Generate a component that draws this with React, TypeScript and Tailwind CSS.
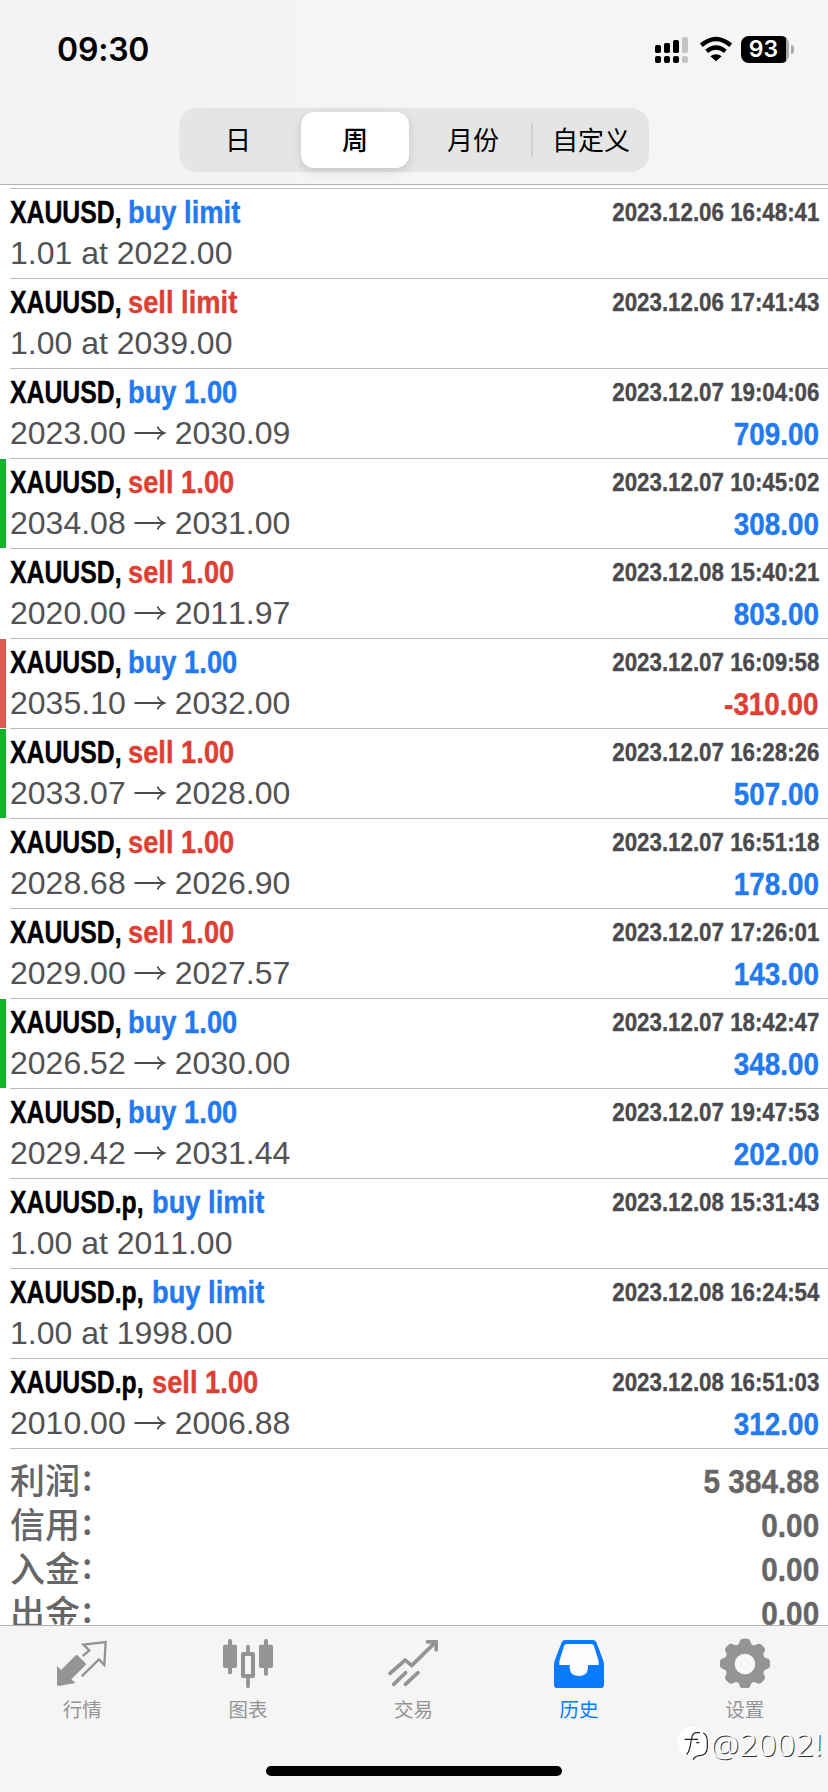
import clsx from 'clsx';
import type { ReactNode } from 'react';

type Deal = {
    symbol: string;
    side: 'buy' | 'sell';
    size: string;
    from: string;
    to?: string;
    time: string;
    profit?: string;
    mark?: 'green' | 'red';
};

const deals: Deal[] = [
    { symbol: 'XAUUSD', side: 'buy', size: 'limit', from: '1.01 at 2022.00', time: '2023.12.06 16:48:41' },
    { symbol: 'XAUUSD', side: 'sell', size: 'limit', from: '1.00 at 2039.00', time: '2023.12.06 17:41:43' },
    { symbol: 'XAUUSD', side: 'buy', size: '1.00', from: '2023.00', to: '2030.09', time: '2023.12.07 19:04:06', profit: '709.00' },
    { symbol: 'XAUUSD', side: 'sell', size: '1.00', from: '2034.08', to: '2031.00', time: '2023.12.07 10:45:02', profit: '308.00', mark: 'green' },
    { symbol: 'XAUUSD', side: 'sell', size: '1.00', from: '2020.00', to: '2011.97', time: '2023.12.08 15:40:21', profit: '803.00' },
    { symbol: 'XAUUSD', side: 'buy', size: '1.00', from: '2035.10', to: '2032.00', time: '2023.12.07 16:09:58', profit: '-310.00', mark: 'red' },
    { symbol: 'XAUUSD', side: 'sell', size: '1.00', from: '2033.07', to: '2028.00', time: '2023.12.07 16:28:26', profit: '507.00', mark: 'green' },
    { symbol: 'XAUUSD', side: 'sell', size: '1.00', from: '2028.68', to: '2026.90', time: '2023.12.07 16:51:18', profit: '178.00' },
    { symbol: 'XAUUSD', side: 'sell', size: '1.00', from: '2029.00', to: '2027.57', time: '2023.12.07 17:26:01', profit: '143.00' },
    { symbol: 'XAUUSD', side: 'buy', size: '1.00', from: '2026.52', to: '2030.00', time: '2023.12.07 18:42:47', profit: '348.00', mark: 'green' },
    { symbol: 'XAUUSD', side: 'buy', size: '1.00', from: '2029.42', to: '2031.44', time: '2023.12.07 19:47:53', profit: '202.00' },
    { symbol: 'XAUUSD.p', side: 'buy', size: 'limit', from: '1.00 at 2011.00', time: '2023.12.08 15:31:43' },
    { symbol: 'XAUUSD.p', side: 'buy', size: 'limit', from: '1.00 at 1998.00', time: '2023.12.08 16:24:54' },
    { symbol: 'XAUUSD.p', side: 'sell', size: '1.00', from: '2010.00', to: '2006.88', time: '2023.12.08 16:51:03', profit: '312.00' },
];

const summary = [
    { label: '利润', value: '5 384.88' },
    { label: '信用', value: '0.00' },
    { label: '入金', value: '0.00' },
    { label: '出金', value: '0.00' },
];

function StatusBar() {
    return (
        <div className="flex h-[98px] items-start justify-between pl-[57px] pr-[34px]">
            <span className="mt-[30px] font-['Inter',sans-serif] text-[32px] font-semibold leading-[40px] tracking-[-0.2px] text-black">
                09:30
            </span>
            <div className="mt-9 flex items-start">
                <svg className="h-[27px] w-[33px]" viewBox="0 0 99 81">
                    <rect x="0" y="27" width="18" height="24" rx="5" />
                    <rect x="27" y="21" width="18" height="30" rx="5" />
                    <rect x="54" y="12" width="18" height="39" rx="5" />
                    <rect x="81" y="3" width="18" height="48" rx="5" fill="#c4c4c6" />
                    <rect x="0" y="60" width="18" height="21" rx="6" />
                    <rect x="27" y="60" width="18" height="21" rx="6" />
                    <rect x="54" y="60" width="18" height="21" rx="6" />
                    <rect x="81" y="60" width="18" height="21" rx="6" fill="#c4c4c6" />
                </svg>
                <svg className="ml-[12px] h-[27px] w-[32px]" viewBox="0 0 96 81" fill="none" stroke="#000" strokeWidth="13">
                    <path d="M4 28Q48 -10 92 28" />
                    <path d="M20 46Q48 23 76 46" />
                    <path d="M31 61Q48 48 65 61L48 76Z" fill="#000" stroke="none" />
                </svg>
                <div className="ml-[9px] flex h-[27px] w-[48px] overflow-hidden rounded-[8px] bg-[#a9a9ab]">
                    <div className="w-[45px] bg-black text-center font-['Inter',sans-serif] text-[23px] font-semibold leading-[27px] text-white">
                        93
                    </div>
                </div>
                <div className="ml-[2px] mt-[9px] h-[9px] w-[3px] rounded-r-full bg-[#a9a9ab]" />
            </div>
        </div>
    );
}

function PeriodTabs() {
    const tab = 'flex items-center justify-center pt-[2px]';
    return (
        <div className="mx-auto mt-[10px] flex h-16 w-[470px] rounded-[18px] bg-[#e5e5e6] py-1 text-[26px] text-black font-['Liberation_Sans','Noto_Sans_CJK_SC',sans-serif]">
            <div className={clsx(tab, 'w-[118px]')}>日</div>
            <div className={clsx(tab, 'ml-[4px] w-[108px] rounded-[13px] bg-white font-medium shadow-[0_3px_10px_rgba(0,0,0,0.14)]')}>周</div>
            <div className={clsx(tab, 'w-[122px] pl-[6px]')}>月份</div>
            <div className="my-[11px] w-[2px] bg-[#cfcfd1]" />
            <div className={clsx(tab, 'flex-1')}>自定义</div>
        </div>
    );
}

function Arrow() {
    return (
        <svg className="mx-[8.500px] inline-block h-6 w-8 align-[-1px]" viewBox="0 0 32 24" fill="none" stroke="#4b4b4d" strokeWidth="1.8">
            <path d="M0.500 12H30M23.500 5.500C25 9 27.500 11 30.500 12C27.500 13 25 15 23.500 18.500" />
        </svg>
    );
}

function DealRow({ deal }: { deal: Deal }) {
    const lossOrGain = deal.profit?.startsWith('-') ? 'text-[#dc4035]' : 'text-[#2379ef]';
    return (
        <div className="flex h-[90px]">
            <div
                className={clsx(
                    'mt-px w-[6px]',
                    deal.mark === 'green' && 'bg-[#13b32b]',
                    deal.mark === 'red' && 'bg-[#df5a4e]'
                )}
            />
            <div className="ml-[4px] flex-1 border-t border-[#bcbcbe] pr-[9px] pt-[3px]">
                <div className="flex h-10 whitespace-nowrap font-bold leading-10 [-webkit-text-stroke-width:0.4px]">
                    <div className={deal.symbol.endsWith('.p') ? 'w-[142px]' : 'w-[118px]'}>
                        <span className="inline-block origin-left scale-x-[0.775] text-[32px] text-black">{deal.symbol},</span>
                    </div>
                    <div className={clsx('flex-1 text-[32px]', deal.side === 'buy' ? 'text-[#2379ef]' : 'text-[#dc4035]')}>
                        <span className="inline-block origin-left scale-x-[0.853]">
                            {deal.side} {deal.size}
                        </span>
                    </div>
                    <span className="inline-block origin-right scale-x-[0.858] text-[26px] text-[#4b4b4d]">{deal.time}</span>
                </div>
                <div className="flex h-[42px] justify-between text-[32px] leading-[42px] [font-kerning:none]">
                    <span className="text-[#525254]">
                        {deal.from}
                        {deal.to && <Arrow />}
                        {deal.to}
                    </span>
                    {deal.profit && (
                        <span
                            className={clsx(
                                'mt-px inline-block origin-right scale-x-[0.87] font-bold [-webkit-text-stroke-width:0.4px]',
                                lossOrGain
                            )}
                        >
                            {deal.profit}
                        </span>
                    )}
                </div>
            </div>
        </div>
    );
}

function Summary() {
    return (
        <div className="ml-[10px] border-t border-[#bcbcbe] pr-[9px] pt-[9px] text-[#666]">
            {summary.map((item) => (
                <div key={item.label} className="flex h-11 justify-between font-bold leading-[44px]">
                    <span className="-mt-px flex text-[35px] font-medium font-['Noto_Sans_CJK_SC',sans-serif]">
                        {item.label}
                        <span className="-mt-[3px] ml-[2px]">:</span>
                    </span>
                    <span className="mt-px inline-block origin-right scale-x-[0.875] text-[34px] [-webkit-text-stroke-width:0.4px]">
                        {item.value}
                    </span>
                </div>
            ))}
        </div>
    );
}

function TabItem({ label, active, children }: { label: string; active?: boolean; children: ReactNode }) {
    return (
        <div className={clsx('flex flex-1 flex-col items-center', active ? 'text-[#0a7aff]' : 'text-[#949494]')}>
            <svg className="mt-3 mr-[1px] h-[50px] w-[50px]" viewBox="0 0 150 150" fill="currentColor">
                {children}
            </svg>
            <span className="mr-[1px] mt-[6px] text-[19.5px] leading-[30px] font-['Noto_Sans_CJK_SC',sans-serif]">{label}</span>
        </div>
    );
}

// eight wide teeth with soft shoulders
const gearPath =
    Array.from({ length: 240 }, (_, i) => {
        const a = (i / 240) * Math.PI * 2;
        const r = 67 + 8.5 * Math.tanh(1.6 * (Math.cos(8 * a) + 0.4));
        return `${i ? 'L' : 'M'}${(75 + r * Math.cos(a)).toFixed(1)} ${(77 + r * Math.sin(a)).toFixed(1)}`;
    }).join('') + 'Z';

function TabBar() {
    return (
        <div className="relative h-[167px] border-t border-[#b0b0b2] bg-[#f5f5f6]">
            <div className="flex">
                <TabItem label="行情">
                    <path d="M0 83L12 96L57 51Q60 50 63 53L85 75Q88 78 86 81L43 124L55 135L6 144L0 142Z" />
                    <path d="M77 54L97 37L79 20L146 12L142 81L126 64L74 115" fill="none" stroke="currentColor" strokeWidth="7" />
                </TabItem>
                <TabItem label="图表">
                    <rect x="0" y="20" width="42" height="70" rx="5" />
                    <rect x="15" y="3" width="12" height="106" rx="5" />
                    <rect x="108" y="20" width="42" height="70" rx="5" />
                    <rect x="123" y="3" width="12" height="110" rx="5" />
                    <rect x="60" y="48" width="30" height="66" fill="none" stroke="currentColor" strokeWidth="12" strokeLinejoin="round" />
                    <path d="M75 26V44M75 118V145" stroke="currentColor" strokeWidth="11" strokeLinecap="round" />
                </TabItem>
                <TabItem label="交易">
                    <g fill="none" stroke="currentColor" strokeWidth="11" strokeLinecap="round" strokeLinejoin="round">
                        <path d="M6 106L52 66L71 83L141 14" />
                        <path d="M118 11.500H144.500V36" strokeLinejoin="miter" />
                        <path d="M17 139L53 104M52 139L90 104" />
                    </g>
                </TabItem>
                <TabItem label="历史" active>
                    <path d="M34 6H116Q124 6 127 13L146 62Q150 72 150 80V140Q150 150 140 150H10Q0 150 0 140V80Q0 72 4 62L23 13Q26 6 34 6Z" />
                    <path
                        d="M38 18H112Q118 18 120 24L134 70V81H102V90Q100 114 74.500 114Q49 114 47 90V81H16V70L30 24Q32 18 38 18Z"
                        fill="#fdfdfe"
                    />
                </TabItem>
                <TabItem label="设置">
                    <path d={gearPath} />
                    <circle cx="75" cy="78" r="31" fill="#f9f9f9" />
                    <circle cx="75" cy="78" r="13" fill="none" stroke="#eeeeef" strokeWidth="4" />
                </TabItem>
            </div>
            <div className="absolute bottom-[16px] left-[266px] h-[10px] w-[296px] rounded-full bg-black" />
            <Watermark />
        </div>
    );
}

function Watermark() {
    return (
        <div className="absolute right-[5px] top-[98px] flex items-center">
            <svg className="h-[36px] w-[32px]" viewBox="0 0 96 108">
                <rect x="1" y="4" width="88" height="88" rx="32" fill="#fff" />
                <g fill="none" stroke="#222" strokeWidth="3.500">
                    <path d="M66 20H56Q44 20 41 36L36 64Q33 78 26 86M20 40H60M55 50H64" />
                    <path d="M76 20Q88 28 88 46V62Q88 88 64 89Q52 90 45 101" />
                </g>
            </svg>
            <span className="ml-px font-['Noto_Sans',sans-serif] text-[32px] font-light leading-[40px] tracking-[0.5px] text-white [text-shadow:1px_1px_0.5px_#333]">
                @2002!
            </span>
        </div>
    );
}

export default function App() {
    return (
        <div className="flex h-[1792px] w-[828px] flex-col overflow-hidden bg-white font-['Liberation_Sans','Noto_Sans_CJK_SC',sans-serif]">
            <div className="h-[185px] shrink-0 border-b border-[#b0b0b2] bg-linear-to-r from-[#f4f2f3] via-[#f5f5f6] to-[#f5f5f7]">
                <StatusBar />
                <PeriodTabs />
            </div>
            <div className="min-h-0 flex-1 overflow-hidden pt-[3px]">
                {deals.map((deal) => (
                    <DealRow key={deal.time} deal={deal} />
                ))}
                <Summary />
            </div>
            <TabBar />
        </div>
    );
}
